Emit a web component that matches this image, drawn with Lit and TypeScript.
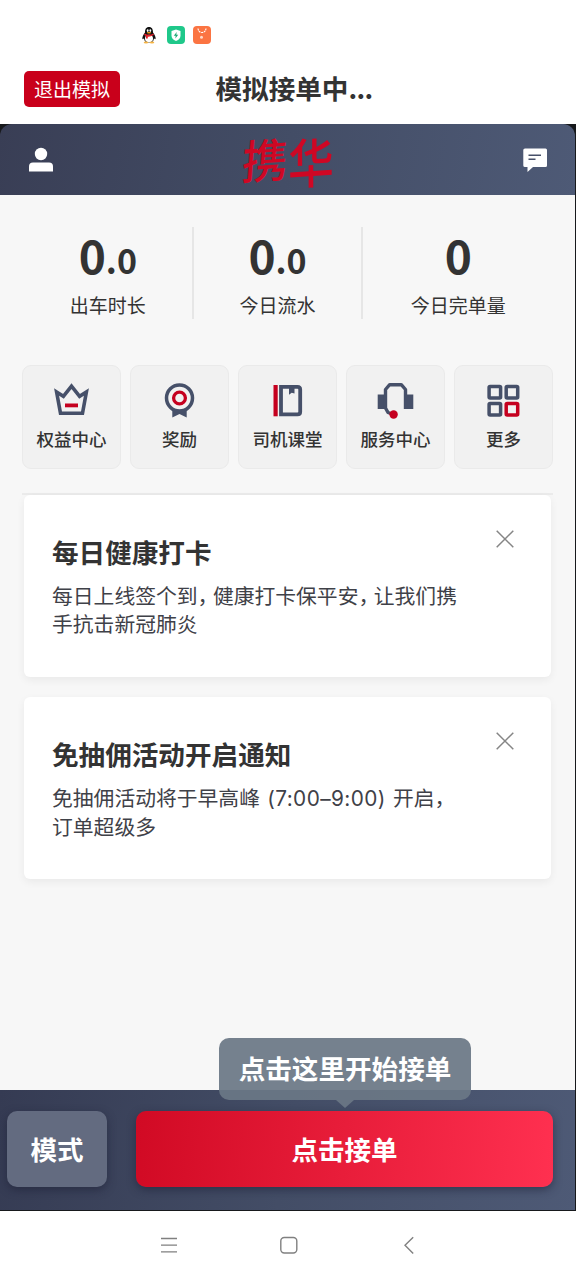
import { LitElement, html, css, svg } from "lit";
import { customElement, state } from "lit/decorators.js";

const stats = [
  { whole: "0", frac: ".0", label: "出车时长", cls: "stat first" },
  { whole: "0", frac: ".0", label: "今日流水", cls: "stat" },
  { whole: "0", frac: "", label: "今日完单量", cls: "stat last" },
];

const NAVY = "#465069";
const RED = "#c5001f";

const shortcuts = [
  {
    label: "权益中心",
    icon: svg`<path d="M3.6 9 10.4 13.300 18.500 3.200 26.600 13.300 33.400 9 29.500 30.300H7.500Z" fill="none" stroke=${NAVY} stroke-width="3.600"/><rect x="12" y="20.500" width="13" height="3.800" fill=${RED}/>`,
  },
  {
    label: "奖励",
    icon: svg`<path d="M11.300 26V34.500L18.500 31 25.700 34.500V26Z" fill=${NAVY}/><circle cx="18.500" cy="15" r="13" fill="#f1f1f1" stroke=${NAVY} stroke-width="3.500"/><circle cx="18.500" cy="15" r="5.900" fill="none" stroke=${RED} stroke-width="3.300"/>`,
  },
  {
    label: "司机课堂",
    icon: svg`<rect x="4.500" y="2" width="4.200" height="31.300" fill=${RED}/><path d="M12 3.900H28.500Q31.200 3.900 31.200 6.600V28.700Q31.200 31.400 28.500 31.400H12Z" fill="none" stroke=${NAVY} stroke-width="3.800"/><path d="M20 4H25.500V10.500L22.700 9.700 20 11.800Z" fill=${NAVY}/>`,
  },
  {
    label: "服务中心",
    icon: svg`<path d="M0.700 11.500H7.500V26H0.700Z M29.500 11.500H36.300V26H29.500Z" fill=${NAVY}/><path d="M8.500 26V6.500L12.700 1.700H24.300L28.500 6.500V26M8.500 25 11 29.500 15 31" fill="none" stroke=${NAVY} stroke-width="3.400" stroke-linejoin="round"/><circle cx="16.600" cy="31.500" r="4.200" fill=${RED}/>`,
  },
  {
    label: "更多",
    icon: svg`<g fill="none" stroke=${NAVY} stroke-width="3.500"><rect x="4.100" y="3.600" width="11.500" height="11.500" rx="1"/><rect x="21.200" y="3.600" width="11.500" height="11.500" rx="1"/><rect x="4.100" y="20.400" width="11.500" height="11.500" rx="1"/><rect x="21.200" y="20.400" width="11.500" height="11.500" rx="1" stroke=${RED}/></g>`,
  },
];

const notices = [
  {
    title: "每日健康打卡",
    body: html`每日上线签个到<span class="comma">，</span>健康打卡保平安<span class="comma">，</span>让我们携<br />手抗击新冠肺炎`,
  },
  {
    title: "免抽佣活动开启通知",
    body: html`免抽佣活动将于早高峰<span class="time">(7:00–9:00)</span>开启<span class="comma">，</span><br />订单超级多`,
  },
];

@customElement("app-root")
export class AppRoot extends LitElement {
  @state() private closed: number[] = [];

  static styles = css`
    :host {
      display: flex;
      flex-direction: column;
      width: 576px;
      height: 1280px;
      overflow: hidden;
      background: #fff;
      color: #333;
      font-family: "Noto Sans CJK SC", sans-serif;
    }
    * { box-sizing: border-box; }
    svg { display: block; flex: none; }
    button { border: 0; padding: 0; font-family: inherit; color: inherit; background: none; }
    .status {
      height: 54px;
      padding: 26px 0 0 140px;
      display: flex;
      gap: 8.500px;
    }
    .titlebar {
      height: 70px;
      padding: 0 24px;
      display: grid;
      grid-template-columns: 96px 1fr 96px;
      align-items: center;
    }
    .exit {
      height: 36px;
      border-radius: 5px;
      background: #c9001b;
      color: #fff;
      font-size: 19px;
      line-height: 36px;
      padding-bottom: 2px;
    }
    .title {
      margin: 0;
      text-align: left;
      padding-left: 95.500px;
      font-size: 26.6px;
      line-height: 36px;
      font-weight: 700;
      margin-top: -2px;
      white-space: nowrap;
    }
    .dots { letter-spacing: -0.600px; }
    .frame {
      height: 1087px;
      background: #17191c;
      display: flex;
      flex-direction: column;
      padding-right: 1px;
      padding-bottom: 1px;
    }
    .brand {
      height: 71px;
      flex: none;
      border-radius: 12px 12px 0 0;
      background: linear-gradient(100deg, #393e55, #434d66 50%, #4e5a76);
      display: flex;
      align-items: center;
      justify-content: space-between;
      padding: 0 27px 0 28px;
    }
    .logo {
      display: flex;
      color: #cf0724;
      font-size: 46px;
      line-height: 60px;
      font-weight: 500;
    }
    .logo span { transform: translateY(-2px) rotate(-4deg) skewX(-8deg); }
    .logo span + span { transform: rotate(-4deg) skewX(-4deg) scaleY(1.16); }
    .content {
      flex: 1;
      background: #f7f7f7;
      padding: 32px 22px 0;
    }
    .stats { display: flex; height: 92px; }
    .stat {
      width: 170px;
      display: flex;
      flex-direction: column;
      align-items: center;
      border-right: 2px solid #e6e6e6;
    }
    .first { width: 172px; padding-left: 2px; }
    .last { width: 190px; border-right: 0; }
    .value {
      font-family: "Noto Sans CJK SC", sans-serif;
      font-size: 46px;
      line-height: 60px;
      height: 67px;
      margin-top: -3px;
      font-weight: 700;
    }
    .frac { font-size: 34px; }
    .label { font-size: 19px; line-height: 28px; }
    .tiles {
      margin-top: 46px;
      display: grid;
      grid-template-columns: repeat(5, 99px);
      column-gap: 9px;
    }
    .tile {
      height: 104px;
      border-radius: 9px;
      background: #f1f1f1;
      border: 1px solid #eaeaea;
      display: flex;
      flex-direction: column;
      align-items: center;
      padding-top: 17px;
      font-size: 17.5px;
      line-height: 26px;
      font-weight: 500;
      gap: 6px;
    }
    .notices {
      margin-top: 24px;
      border-top: 2px solid #ebebeb;
      padding: 0 2px 0;
      display: grid;
      gap: 20px;
    }
    .notice {
      height: 182px;
      width: 527px;
      background: #fff;
      border-radius: 6px;
      box-shadow: 0 3px 8px rgba(0, 0, 0, 0.06);
      display: flex;
      justify-content: space-between;
      padding: 35px 37px 0 28px;
    }
    .heading {
      margin: 0;
      font-size: 26.6px;
      line-height: 44px;
      font-weight: 700;
      white-space: nowrap;
    }
    .text {
      margin: 7px 0 0;
      font-size: 20.8px;
      line-height: 28px;
      color: #3f4148;
      white-space: nowrap;
    }
    .comma { letter-spacing: -5.500px; }
    .time {
      display: inline-block;
      width: 133px;
      text-align: center;
      font-family: Inter, sans-serif;
      font-size: 20.800px;
      line-height: 26px;
      letter-spacing: 0.400px;
    }
    .close { height: 18px; }
    .dock {
      height: 120px;
      background: linear-gradient(100deg, #353b53, #434d66 50%, #4e5a76);
      padding: 21px 22px 0 7px;
      display: flex;
      justify-content: space-between;
      position: relative;
    }
    .mode, .go {
      height: 76px;
      border-radius: 10px;
      color: #fff;
      font-size: 26.500px;
      line-height: 76px;
      font-weight: 700;
      box-shadow: 0 3px 8px rgba(25, 28, 50, 0.5);
    }
    .mode { width: 100px; background: #636b80; }
    .go { width: 417px; background: linear-gradient(95deg, #d10a24, #ff3050); }
    .tip {
      position: absolute;
      left: 219px;
      top: -52px;
      width: 252px;
      height: 62px;
      border-radius: 10px;
      background: rgba(106, 119, 133, 0.93);
      color: #fff;
      font-size: 26.600px;
      line-height: 60px;
      font-weight: 700;
      text-align: center;
    }
    .tip::after {
      content: "";
      position: absolute;
      left: 117px;
      top: 62px;
      border: 9px solid transparent;
      border-bottom: 0;
      border-top-color: rgba(106, 119, 133, 0.93);
      border-top-width: 8px;
    }
    .nav {
      flex: 1;
      display: flex;
      justify-content: center;
      gap: 102px;
      padding: 25px 0 0 2px;
    }
  `;

  private dismiss(i: number) {
    this.closed = [...this.closed, i];
  }

  render() {
    return html`
      <div class="status">
        <svg width="18" height="18" viewBox="0 0 18 18">
          <path d="M9 1C5.900 1 5 3.400 5 6.500 3.500 8.500 2 11 2.400 13.200L4 12.500C4.500 15.500 6 16.500 9 16.500S13.500 15.500 14 12.500L15.600 13.200C16 11 14.500 8.500 13 6.500 13 3.400 12.100 1 9 1Z" fill="#111"/>
          <ellipse cx="9" cy="12.500" rx="4" ry="3.800" fill="#fff"/>
          <ellipse cx="7.700" cy="4.600" rx=".9" ry="1.300" fill="#fff"/><ellipse cx="10.300" cy="4.600" rx=".9" ry="1.300" fill="#fff"/>
          <ellipse cx="9" cy="6.700" rx="2.200" ry=".8" fill="#f6a313"/>
          <path d="M4.500 7.500Q9 10 13.500 7.500L13.800 9Q9 11.300 7.800 10.500V12.500H6V10Q4.700 9.700 4.200 9Z" fill="#e3202a"/>
          <ellipse cx="6" cy="16.400" rx="2.300" ry="1" fill="#f6b545"/><ellipse cx="12" cy="16.400" rx="2.300" ry="1" fill="#f6b545"/>
        </svg>
        <svg width="18" height="18" viewBox="0 0 18 18">
          <rect width="18" height="18" rx="4" fill="#1fc88a"/>
          <path d="M9 3.500 13.500 5V9.500Q13.500 13 9 15 4.500 13 4.500 9.500V5Z" fill="#fff"/>
          <path d="M9.700 6 6.800 9.800H8.700L8.300 12.500 11.200 8.700H9.300Z" fill="#1aa873"/>
        </svg>
        <svg width="18" height="18" viewBox="0 0 18 18">
          <rect width="18" height="18" rx="4" fill="#fb7442"/>
          <path d="M5 2.500Q5.500 6.500 9 6.500T13 2.500" fill="none" stroke="#fff" stroke-width="1.100" stroke-dasharray="2 .7"/>
          <circle cx="8.500" cy="11.200" r="1.500" fill="#ffd9c8"/>
        </svg>
      </div>
      <header class="titlebar">
        <button class="exit">退出模拟</button>
        <h1 class="title">模拟接单中<span class="dots">...</span></h1>
      </header>
      <main class="frame">
        <div class="brand">
          <svg width="26" height="26" viewBox="0 0 26 26" fill="#fff">
            <circle cx="13" cy="7" r="6.200"/><path d="M1 24.500V19.500Q1 15.500 5 15.500H21Q25 15.500 25 19.500V24.500Z"/>
          </svg>
          <div class="logo"><span>携</span><span>华</span></div>
          <svg width="26" height="26" viewBox="0 0 26 26">
            <path d="M3 1.500H23.500Q25 1.500 25 3V18.500Q25 20 23.500 20H11L5.500 25V20H3Q1.300 20 1.300 18.500V3Q1.300 1.500 3 1.500Z" fill="#fff"/>
            <path d="M6.500 8.300H19M6.500 12.300H13.500" stroke="#465069" stroke-width="1.500"/>
          </svg>
        </div>
        <div class="content">
          <section class="stats">
            ${stats.map(
              (s) => html`<div class=${s.cls}>
                <div class="value">${s.whole}<span class="frac">${s.frac}</span></div>
                <div class="label">${s.label}</div>
              </div>`
            )}
          </section>
          <nav class="tiles">
            ${shortcuts.map(
              (t) => html`<a class="tile"><svg width="37" height="37" viewBox="0 0 37 37">${t.icon}</svg>${t.label}</a>`
            )}
          </nav>
          <section class="notices">
            ${notices.map((n, i) =>
              this.closed.includes(i)
                ? null
                : html`<article class="notice">
                    <div>
                      <h2 class="heading">${n.title}</h2>
                      <p class="text">${n.body}</p>
                    </div>
                    <button class="close" aria-label="关闭" @click=${() => this.dismiss(i)}>
                      <svg width="18" height="18" viewBox="0 0 18 18">
                        <path d="M.7.7 17.300 17.300M17.300.7.7 17.300" stroke="#858585" stroke-width="1.500"/>
                      </svg>
                    </button>
                  </article>`
            )}
          </section>
        </div>
        <footer class="dock">
          <button class="mode">模式</button>
          <button class="go">点击接单</button>
          <div class="tip">点击这里开始接单</div>
        </footer>
      </main>
      <div class="nav">
        <svg width="18" height="18" viewBox="0 0 18 18"><path d="M1 2.500H17M1 9.200H17M1 15.900H17" stroke="#808080" stroke-width="1.300"/></svg>
        <svg width="18" height="18" viewBox="0 0 18 18"><rect x=".8" y="1.500" width="16" height="15.500" rx="3.500" fill="none" stroke="#808080" stroke-width="1.400"/></svg>
        <svg width="18" height="18" viewBox="0 0 18 18"><path d="M13.200 1.200 5 9.300 13.200 17.400" fill="none" stroke="#808080" stroke-width="1.400"/></svg>
      </div>
    `;
  }
}
